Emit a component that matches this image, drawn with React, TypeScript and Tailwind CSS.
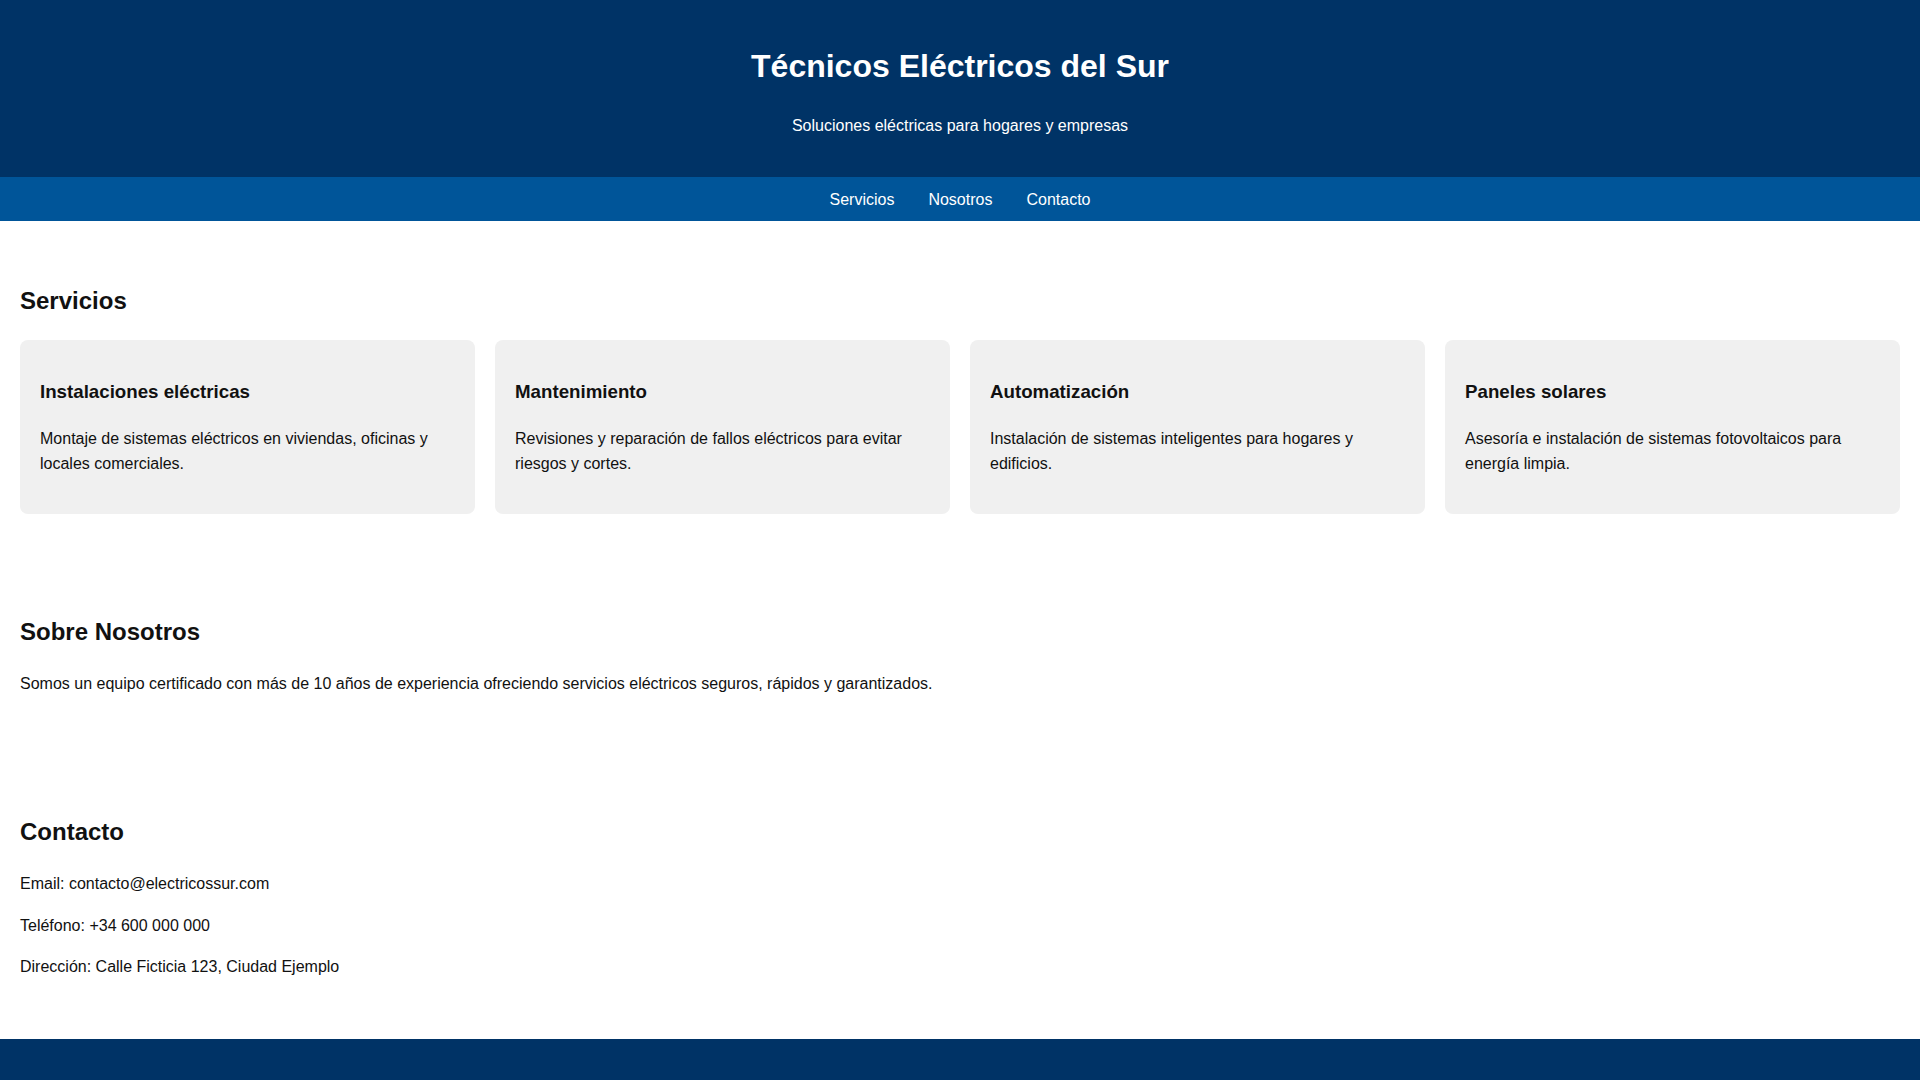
import React from 'react';

const services = [
  { title: 'Instalaciones eléctricas', text: 'Montaje de sistemas eléctricos en viviendas, oficinas y locales comerciales.' },
  { title: 'Mantenimiento', text: 'Revisiones y reparación de fallos eléctricos para evitar riesgos y cortes.' },
  { title: 'Automatización', text: 'Instalación de sistemas inteligentes para hogares y edificios.' },
  { title: 'Paneles solares', text: 'Asesoría e instalación de sistemas fotovoltaicos para energía limpia.' },
];

const App: React.FC = () => {
  return (
    <div className="bg-white text-[#111] text-[16px] leading-[25px]" style={{ fontFamily: '"Liberation Sans", Arial, sans-serif' }}>
      <header className="bg-[#003366] text-white text-center pt-8 pb-8">
        <h1 className="text-[32px] leading-[37px] font-bold mt-[16px] mb-[32px]">Técnicos Eléctricos del Sur</h1>
        <p className="leading-[18px] mb-[10px]">Soluciones eléctricas para hogares y empresas</p>
      </header>

      <nav className="bg-[#005599] h-[44px] flex items-center justify-center gap-[34px] text-white">
        <a href="#servicios">Servicios</a>
        <a href="#nosotros">Nosotros</a>
        <a href="#contacto">Contacto</a>
      </nav>

      <section id="servicios" className="px-5 pt-[66px]">
        <h2 className="text-[24px] leading-[28px] font-bold mb-[25px]">Servicios</h2>
        <div className="grid grid-cols-4 gap-5">
          {services.map(s => (
            <div key={s.title} className="bg-[#f0f0f0] rounded-lg px-5 pt-5 pb-[38px]">
              <h3 className="text-[18.72px] leading-[22px] font-bold mt-[21px] mb-[23px]">{s.title}</h3>
              <p>{s.text}</p>
            </div>
          ))}
        </div>
      </section>

      <section id="nosotros" className="px-5 pt-[104px]">
        <h2 className="text-[24px] leading-[28px] font-bold mb-[25px]">Sobre Nosotros</h2>
        <p>Somos un equipo certificado con más de 10 años de experiencia ofreciendo servicios eléctricos seguros, rápidos y garantizados.</p>
      </section>

      <section id="contacto" className="px-5 pt-[122px]">
        <h2 className="text-[24px] leading-[28px] font-bold mb-[25px]">Contacto</h2>
        <div className="flex flex-col gap-[16.5px]">
          <p>Email: contacto@electricossur.com</p>
          <p>Teléfono: +34 600 000 000</p>
          <p>Dirección: Calle Ficticia 123, Ciudad Ejemplo</p>
        </div>
      </section>

      <footer className="mt-[60px] bg-[#003366] text-white text-center pt-[38px] pb-[38px]">
        <p>© 2025 Técnicos Eléctricos del Sur. Todos los derechos reservados.</p>
      </footer>
    </div>
  );
};

export default App;
